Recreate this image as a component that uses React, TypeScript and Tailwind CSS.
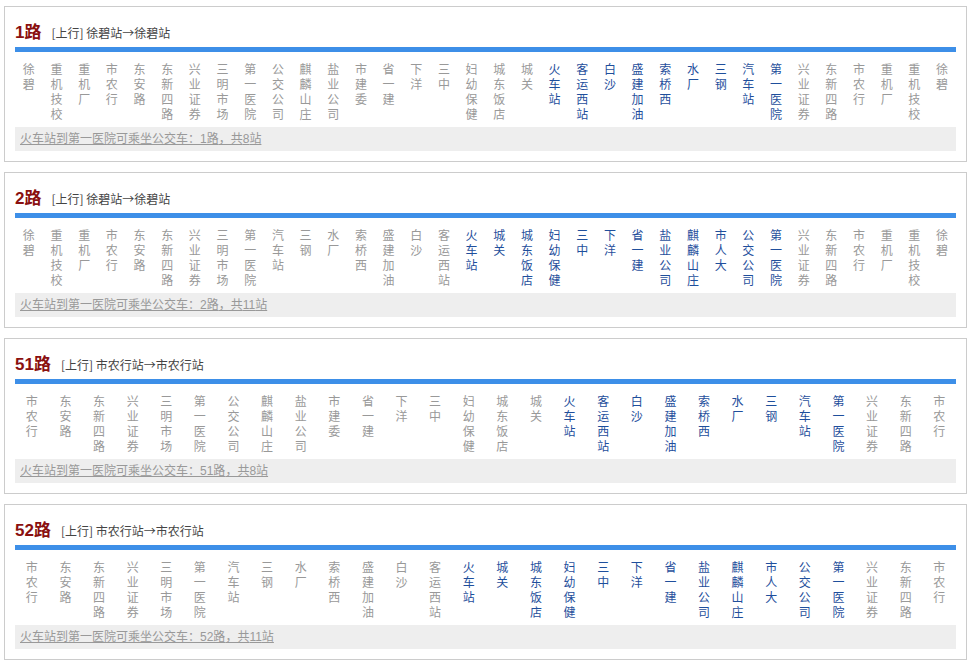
const FONT = { fontFamily: '"Liberation Sans", "Noto Sans CJK SC", sans-serif' }

type Line = {
  name: string
  from: string
  to: string
  stations: string[]
  start: number
  end: number
  count: number
}

const RING_A = [
  "徐碧", "重机技校", "重机厂", "市农行", "东安路", "东新四路", "兴业证券", "三明市场", "第一医院",
  "公交公司", "麒麟山庄", "盐业公司", "市建委", "省一建", "下洋", "三中", "妇幼保健", "城东饭店",
  "城关", "火车站", "客运西站", "白沙", "盛建加油", "索桥西", "水厂", "三钢", "汽车站", "第一医院",
  "兴业证券", "东新四路", "市农行", "重机厂", "重机技校", "徐碧",
]

const RING_B = [
  "徐碧", "重机技校", "重机厂", "市农行", "东安路", "东新四路", "兴业证券", "三明市场", "第一医院",
  "汽车站", "三钢", "水厂", "索桥西", "盛建加油", "白沙", "客运西站", "火车站", "城关", "城东饭店",
  "妇幼保健", "三中", "下洋", "省一建", "盐业公司", "麒麟山庄", "市人大", "公交公司", "第一医院",
  "兴业证券", "东新四路", "市农行", "重机厂", "重机技校", "徐碧",
]

const LINES: Line[] = [
  { name: "1路", from: "徐碧站", to: "徐碧站", stations: RING_A, start: 19, end: 27, count: 8 },
  { name: "2路", from: "徐碧站", to: "徐碧站", stations: RING_B, start: 16, end: 27, count: 11 },
  { name: "51路", from: "市农行站", to: "市农行站", stations: RING_A.slice(3, 31), start: 16, end: 24, count: 8 },
  { name: "52路", from: "市农行站", to: "市农行站", stations: RING_B.slice(3, 31), start: 13, end: 24, count: 11 },
]

const LineCard = ({ line }: { line: Line }) => {
  return (
    <div className="w-[963px] border border-[#cccccc] bg-white px-[10px] pt-[14px] pb-[10px]">
      <div className="flex items-center h-[24px]">
        <span className="text-[17px] font-bold text-[#8a1010] leading-[24px]">{line.name}</span>
        <span className="ml-[10px] text-[12px] text-[#444444] leading-[24px] font-['Noto_Sans_CJK_SC',sans-serif]">
          [上行] {line.from}→{line.to}
        </span>
      </div>
      <div className="mt-[2px] h-[5px] bg-[#3d8fe8]" />
      <div className="mt-[11px] flex h-[60px]">
        {line.stations.map((s, i) => {
          const on = i >= line.start && i <= line.end
          return (
            <div
              key={i}
              className={
                "flex-1 flex flex-col items-center text-[12px] leading-[15px] " +
                (on ? "text-[#1f4f9c]" : "text-[#999999]")
              }
            >
              {s.split("").map((c, j) => (
                <span key={j}>{c}</span>
              ))}
            </div>
          )
        })}
      </div>
      <div className="mt-[4px] h-[24px] bg-[#eeeeee] px-[5px] text-[12px] leading-[24px] text-[#999999]">
        <span className="underline">
          火车站到第一医院可乘坐公交车：{line.name}，共{line.count}站
        </span>
      </div>
    </div>
  )
}

export default function App() {
  return (
    <div className="bg-white min-h-[663px] pt-[6px] pl-[4px] flex flex-col gap-[10px]" style={FONT}>
      {LINES.map((l) => (
        <LineCard key={l.name} line={l} />
      ))}
    </div>
  )
}
